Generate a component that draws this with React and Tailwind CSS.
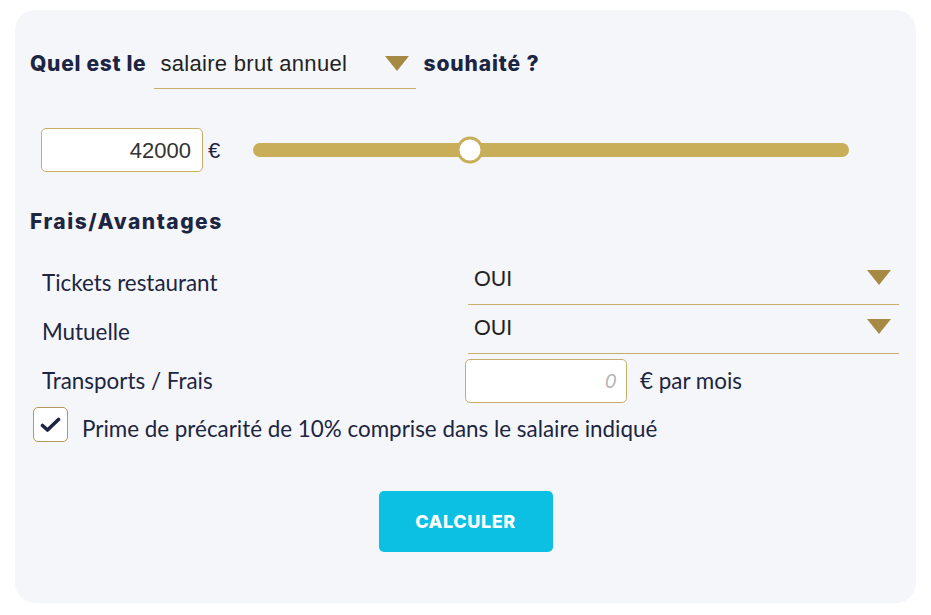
import React from "react";

const Tri = ({ className = "" }) => (
  <svg width="24" height="15" viewBox="0 0 24 15" className={className}>
    <polygon points="0,0 24,0 12,15" fill="#a68a44" />
  </svg>
);

export default function App() {
  const pct = 36.4;
  return (
    <div className="w-[931px] h-[615px] bg-white pt-[10px] px-[15px]">
      <div className="h-[593px] rounded-[20px] bg-[#f5f6fa] px-[15px] pt-[29px] text-[#1c2541]">
        {/* Row 1 */}
        <div className="flex items-center h-[50px]">
          <span className="font-['Inter',sans-serif] font-extrabold text-[21px] tracking-[0.7px]">Quel est le</span>
          <div className="ml-[8px] w-[262px] h-[50px] border-b border-[#c9ae6a] flex items-center justify-between pl-[6px] pr-[7px]">
            <span className="font-['Liberation_Sans',Arial,sans-serif] text-[22px] text-[#222] tracking-[0.3px]">salaire brut annuel</span>
            <Tri className="mb-[1px]" />
          </div>
          <span className="ml-[7px] font-['Inter',sans-serif] font-extrabold text-[21px] tracking-[0.9px]">souhaité ?</span>
        </div>

        {/* Row 2 */}
        <div className="flex items-center mt-[39px] ml-[11px] h-[44px]">
          <div className="w-[162px] h-[44px] rounded-[5px] border border-[#c9ae6a] bg-white flex items-center justify-end pr-[11px]">
            <span className="font-['Liberation_Sans',Arial,sans-serif] text-[22px] text-[#333]">42000</span>
          </div>
          <span className="ml-[5px] font-['Liberation_Sans',Arial,sans-serif] text-[22px] text-[#1c2541]">€</span>
          <div className="relative ml-[33px] w-[596px] h-[14px] rounded-full bg-[#c9ae5a]">
            <div
              className="absolute top-1/2 w-[27px] h-[27px] -translate-x-1/2 -translate-y-1/2 rounded-full bg-white border-[3px] border-[#c9ae5a]"
              style={{ left: `${pct}%` }}
            />
          </div>
        </div>

        {/* Heading */}
        <div className="mt-[35px] h-[30px] flex items-center font-['Inter',sans-serif] font-extrabold text-[21px] tracking-[1.5px]">
          Frais/Avantages
        </div>

        {/* Rows */}
        <div className="mt-[23px] flex flex-col gap-[4px] font-['Lato',sans-serif] text-[22.4px]">
          <div className="grid grid-cols-[423px_1fr] pl-[12px] h-[45px] items-center">
            <span>Tickets restaurant</span>
            <div className="ml-[3px] mr-[2px] h-[45px] border-b border-[#c9ae6a] flex items-center justify-between pl-[6px] pr-[8px] pb-[9px]">
              <span className="text-[#222] text-[21px]">OUI</span>
              <Tri />
            </div>
          </div>
          <div className="grid grid-cols-[423px_1fr] pl-[12px] h-[45px] items-center">
            <span>Mutuelle</span>
            <div className="ml-[3px] mr-[2px] h-[45px] border-b border-[#c9ae6a] flex items-center justify-between pl-[6px] pr-[8px] pb-[9px]">
              <span className="text-[#222] text-[21px]">OUI</span>
              <Tri />
            </div>
          </div>
          <div className="grid grid-cols-[423px_1fr] pl-[12px] h-[45px] items-center">
            <span>Transports / Frais</span>
            <div className="flex items-center">
              <div className="w-[162px] h-[44px] rounded-[5px] border border-[#c9ae6a] bg-white flex items-center justify-end pr-[10px]">
                <span className="font-['Liberation_Sans',Arial,sans-serif] italic text-[20px] text-[#b5b5b5]">0</span>
              </div>
              <span className="ml-[13px]">€ par mois</span>
            </div>
          </div>
          <div className="flex items-center ml-[3px] h-[35px]">
            <div className="w-[35px] h-[35px] rounded-[5px] border border-[#b39a5e] bg-white flex items-center justify-center">
              <svg width="21" height="16" viewBox="0 0 21 16">
                <polyline points="2.5,8.5 7.5,13 18.5,2.5" fill="none" stroke="#1c2541" strokeWidth="3.6" strokeLinecap="round" strokeLinejoin="round" />
              </svg>
            </div>
            <span className="ml-[14px] mt-[8px]">Prime de précarité de 10% comprise dans le salaire indiqué</span>
          </div>
        </div>

        {/* Button */}
        <div className="mt-[49px] flex justify-center">
          <div className="w-[174px] h-[61px] rounded-[5px] bg-[#0cc0e3] flex items-center justify-center font-['Inter',sans-serif] font-extrabold text-[18px] text-white tracking-[0.6px]">
            CALCULER
          </div>
        </div>
      </div>
    </div>
  );
}
